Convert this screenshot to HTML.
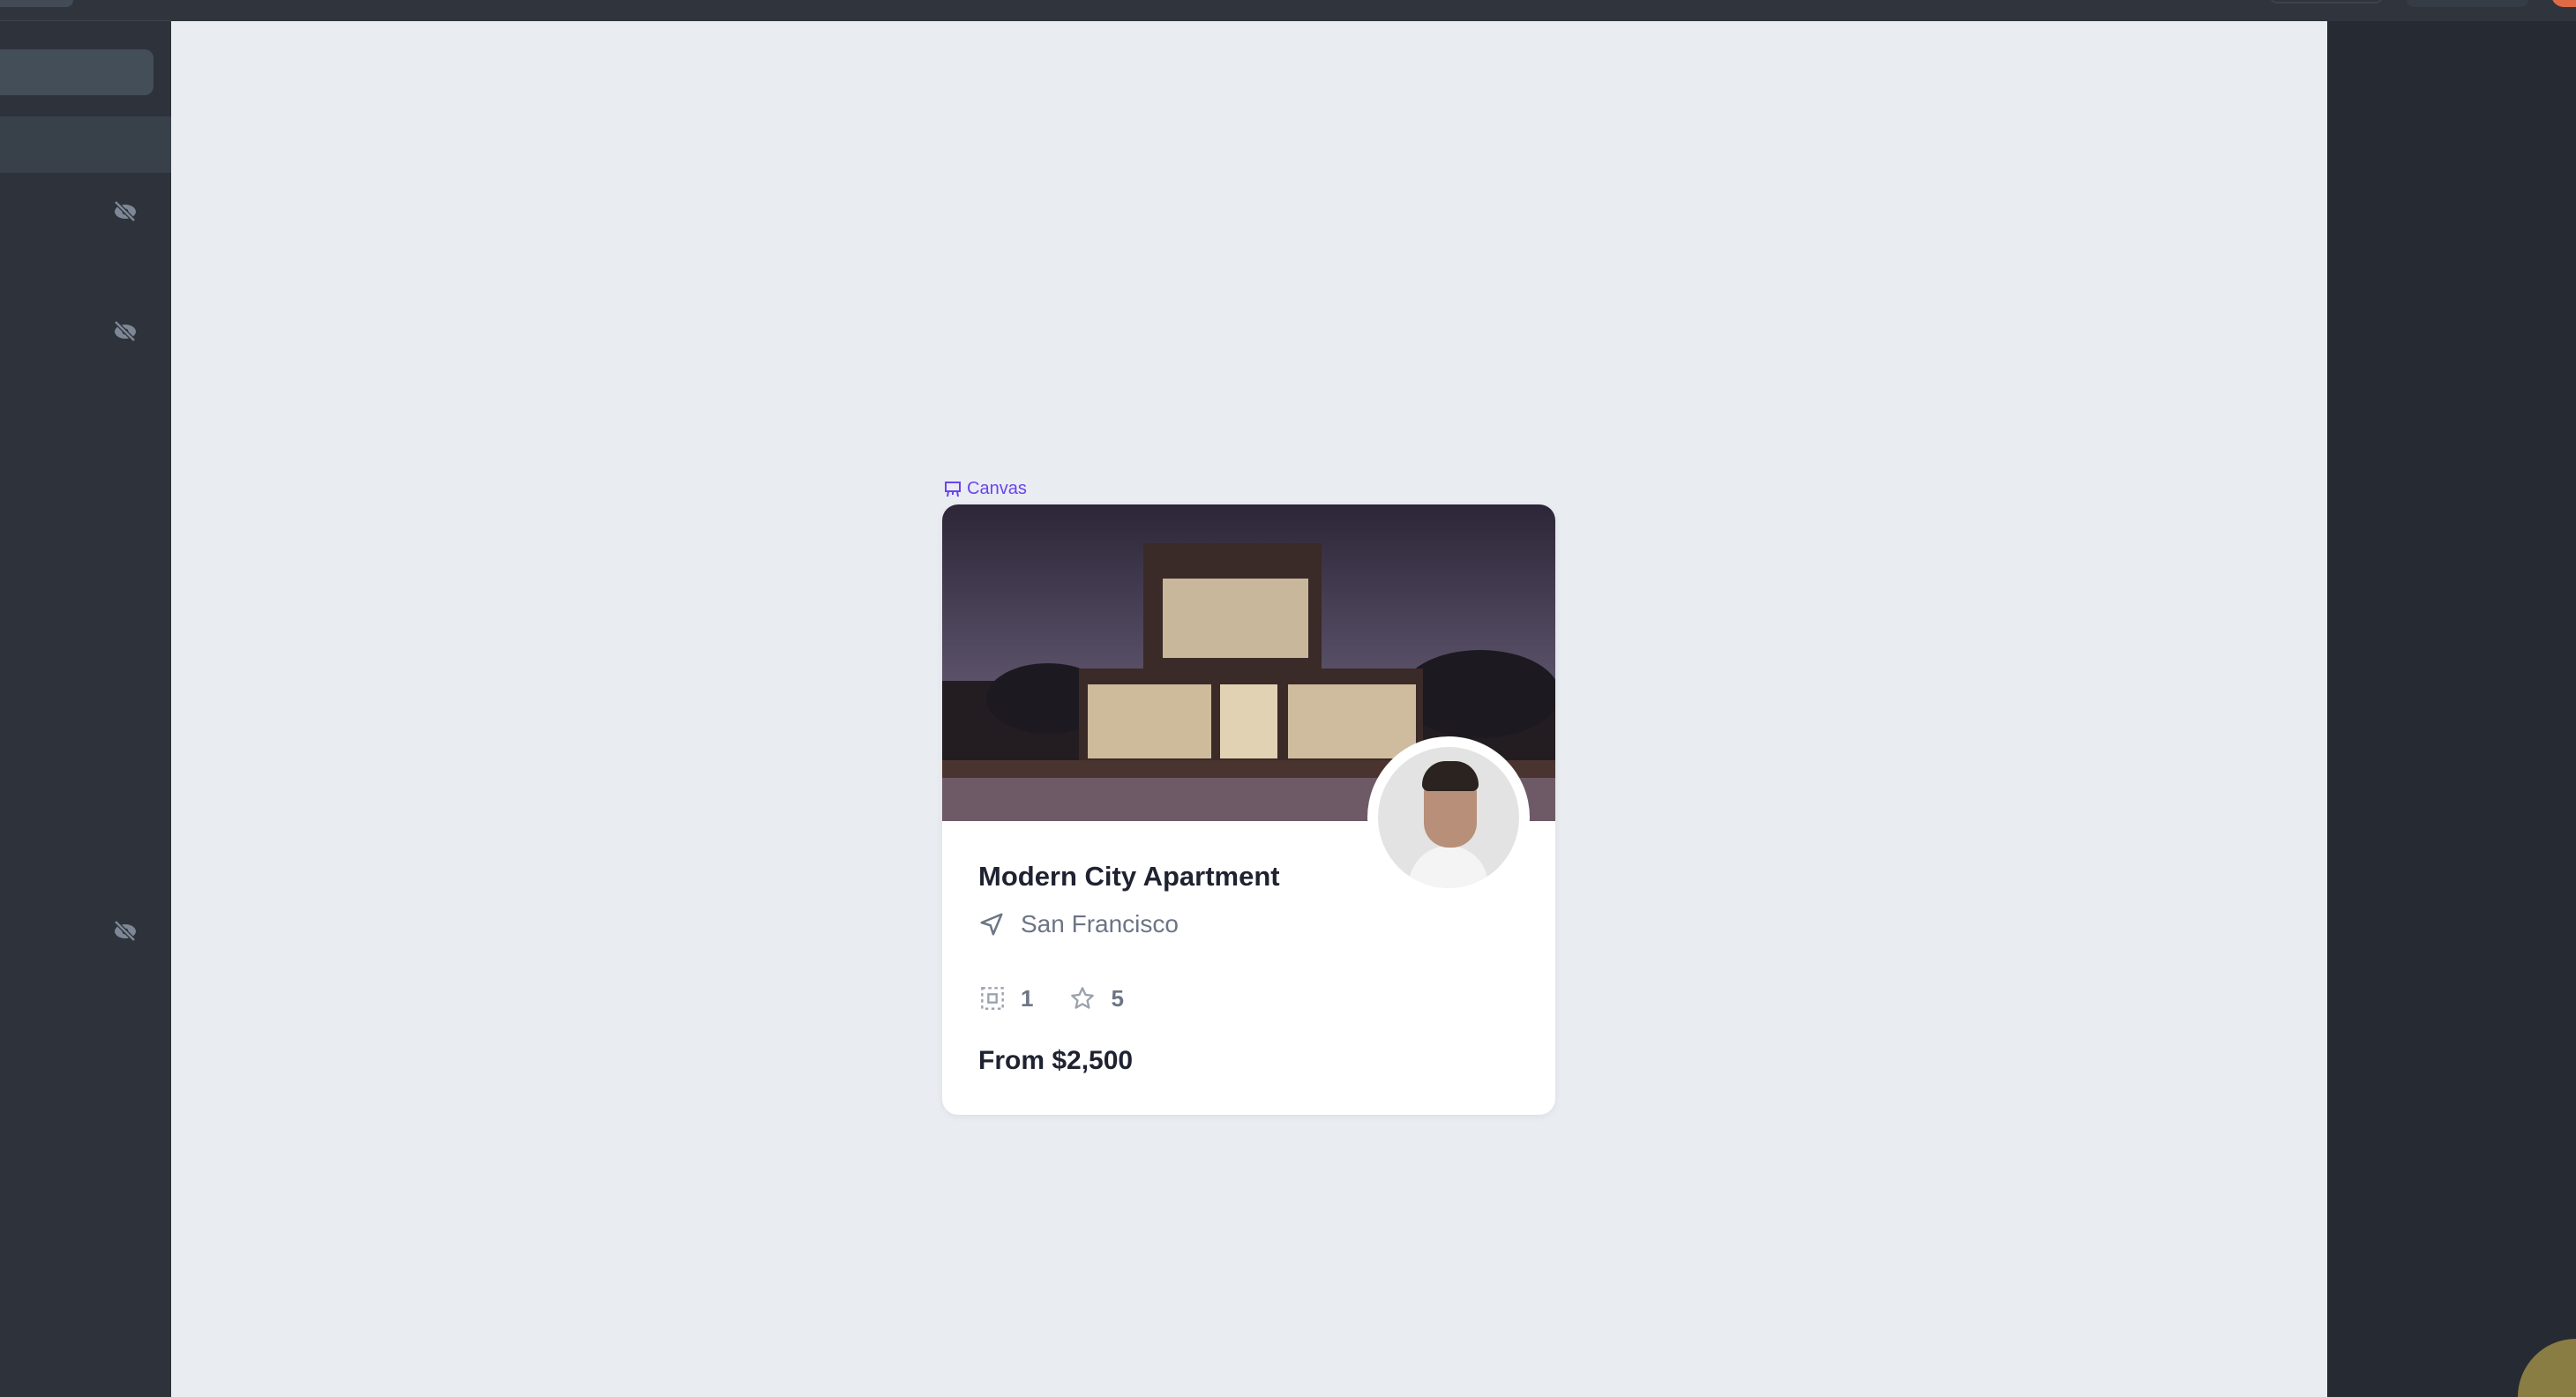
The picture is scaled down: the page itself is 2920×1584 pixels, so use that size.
<!DOCTYPE html>
<html><head><meta charset="utf-8"><style>
*{margin:0;padding:0;box-sizing:border-box}
html,body{width:2920px;height:1584px;overflow:hidden}
body{background:#2e323a;font-family:"Liberation Sans",sans-serif}
#root{position:relative;width:2920px;height:1584px;overflow:hidden}
.a{position:absolute}
</style></head><body><div id="root">
<div class="a" style="left:0;top:0;width:2920px;height:24px;background:#30353d"></div>
<div class="a" style="left:0;top:23px;width:194px;height:2px;background:#3d434c"></div>
<div class="a" style="left:-10px;top:-10px;width:93px;height:18px;border-radius:8px;background:#434c56"></div>
<div class="a" style="left:2573px;top:-14px;width:128px;height:18px;border-radius:8px;border:2px solid #3d434c"></div>
<div class="a" style="left:2728px;top:-14px;width:138px;height:22px;border-radius:8px;background:#363c45"></div>
<div class="a" style="left:2892px;top:-30px;width:60px;height:38px;border-radius:14px;background:#e06a45"></div>
<div class="a" style="left:0;top:24px;width:194px;height:1560px;background:#2e323a"></div>
<div class="a" style="left:-10px;top:56px;width:184px;height:52px;border-radius:10px;background:#434e59"></div>
<div class="a" style="left:0;top:132px;width:194px;height:64px;background:#38404a"></div>
<svg class="a" style="left:128px;top:228px" width="28" height="24" viewBox="0 0 28 24"><ellipse cx="14" cy="12" rx="12" ry="8" fill="#7d8796"/><circle cx="14" cy="12" r="3.5" fill="#2e323a"/><line x1="3" y1="1" x2="24" y2="22" stroke="#2e323a" stroke-width="5"/><line x1="3" y1="1" x2="24" y2="22" stroke="#7d8796" stroke-width="2.5"/></svg>
<svg class="a" style="left:128px;top:364px" width="28" height="24" viewBox="0 0 28 24"><ellipse cx="14" cy="12" rx="12" ry="8" fill="#7d8796"/><circle cx="14" cy="12" r="3.5" fill="#2e323a"/><line x1="3" y1="1" x2="24" y2="22" stroke="#2e323a" stroke-width="5"/><line x1="3" y1="1" x2="24" y2="22" stroke="#7d8796" stroke-width="2.5"/></svg>
<svg class="a" style="left:128px;top:1044px" width="28" height="24" viewBox="0 0 28 24"><ellipse cx="14" cy="12" rx="12" ry="8" fill="#7d8796"/><circle cx="14" cy="12" r="3.5" fill="#2e323a"/><line x1="3" y1="1" x2="24" y2="22" stroke="#2e323a" stroke-width="5"/><line x1="3" y1="1" x2="24" y2="22" stroke="#7d8796" stroke-width="2.5"/></svg>
<div class="a" style="left:194px;top:24px;width:2444px;height:1560px;background:#e9ecf1"></div>
<div class="a" style="left:2638px;top:24px;width:282px;height:1560px;background:#262a32"></div>
<div class="a" style="left:2854px;top:1518px;width:132px;height:132px;border-radius:50%;background:#8a7d44"></div>

<svg class="a" style="left:1070px;top:545px" width="20" height="20" viewBox="0 0 20 20" fill="none" stroke="#6a44ee" stroke-width="2"><rect x="2" y="2" width="16" height="10"/><path d="M5 12l-1 6M15 12l1 6M10 12v4"/></svg>
<div class="a" style="left:1096px;top:543px;font-size:20px;color:#6a44ee">Canvas</div>

<div class="a" style="left:1068px;top:572px;width:695px;height:692px;background:#fff;border-radius:18px;overflow:hidden;box-shadow:0 2px 8px rgba(0,0,0,.06)">
<svg width="695" height="359" viewBox="0 0 695 359" style="display:block">
<defs><linearGradient id="s" x1="0" y1="0" x2="0" y2="1"><stop offset="0" stop-color="#2c2638"/><stop offset=".55" stop-color="#5a5168"/><stop offset="1" stop-color="#3a2c30"/></linearGradient></defs>
<rect width="695" height="359" fill="url(#s)"/>
<rect x="0" y="200" width="695" height="100" fill="#231d22"/>
<ellipse cx="120" cy="220" rx="70" ry="40" fill="#1c1a20"/><ellipse cx="610" cy="215" rx="90" ry="50" fill="#1c1a20"/>
<rect x="228" y="44" width="202" height="150" fill="#3a2a28"/>
<rect x="250" y="84" width="165" height="90" fill="#c9b79c"/>
<rect x="155" y="186" width="390" height="110" fill="#3a2a28"/>
<rect x="165" y="204" width="140" height="84" fill="#cdbb9c"/>
<rect x="315" y="204" width="65" height="84" fill="#e2d2b4"/>
<rect x="392" y="204" width="145" height="84" fill="#cfbc9e"/>
<rect x="0" y="290" width="695" height="22" fill="#4a3430"/>
<rect x="0" y="310" width="695" height="49" fill="#6e5a66"/>
</svg>
<div class="a" style="left:41px;top:404px;font-size:31px;font-weight:bold;color:#1f2230;line-height:36px">Modern City Apartment</div>
<div class="a" style="left:41px;top:459px;display:flex;align-items:center;color:#6b7585;font-size:28px;line-height:34px">
<svg width="30" height="30" viewBox="0 0 24 24" fill="none" stroke="#6b7585" stroke-width="2" stroke-linejoin="round"><path d="M21 3L3 10.5l8 2.5 2.5 8z"/></svg>
<span style="margin-left:18px">San Francisco</span></div>
<div class="a" style="left:43px;top:545px;display:flex;align-items:center;color:#6b7585;font-size:26px;font-weight:bold;line-height:30px">
<svg width="28" height="28" viewBox="0 0 24 24" fill="none" stroke="#9aa2ae" stroke-width="2" stroke-dasharray="3 3"><rect x="2" y="2" width="20" height="20"/><rect x="8" y="8" width="8" height="8" stroke-dasharray="none"/></svg>
<span style="margin-left:18px">1</span>
<svg style="margin-left:42px" width="28" height="28" viewBox="0 0 24 24" fill="none" stroke="#9aa2ae" stroke-width="2" stroke-linejoin="round"><path d="M12 2l3 6.5 7 .8-5.2 4.8 1.5 7-6.3-3.6-6.3 3.6 1.5-7L2 9.3l7-.8z"/></svg>
<span style="margin-left:18px">5</span></div>
<div class="a" style="left:41px;top:613px;font-size:30px;font-weight:bold;color:#1f2230;line-height:36px">From $2,500</div>
</div>
<div class="a" style="left:1550px;top:835px;width:184px;height:184px;border-radius:50%;background:#fff"></div>
<div class="a" style="left:1562px;top:847px;width:160px;height:160px;border-radius:50%;background:#e2e3e2;overflow:hidden">
<div class="a" style="left:35px;top:112px;width:90px;height:80px;border-radius:45px 45px 0 0;background:#f4f4f4"></div>
<div class="a" style="left:52px;top:24px;width:60px;height:90px;border-radius:28px;background:#b88f78"></div>
<div class="a" style="left:50px;top:16px;width:64px;height:34px;border-radius:30px 30px 8px 8px;background:#2b2320"></div>
</div>
</div></body></html>
